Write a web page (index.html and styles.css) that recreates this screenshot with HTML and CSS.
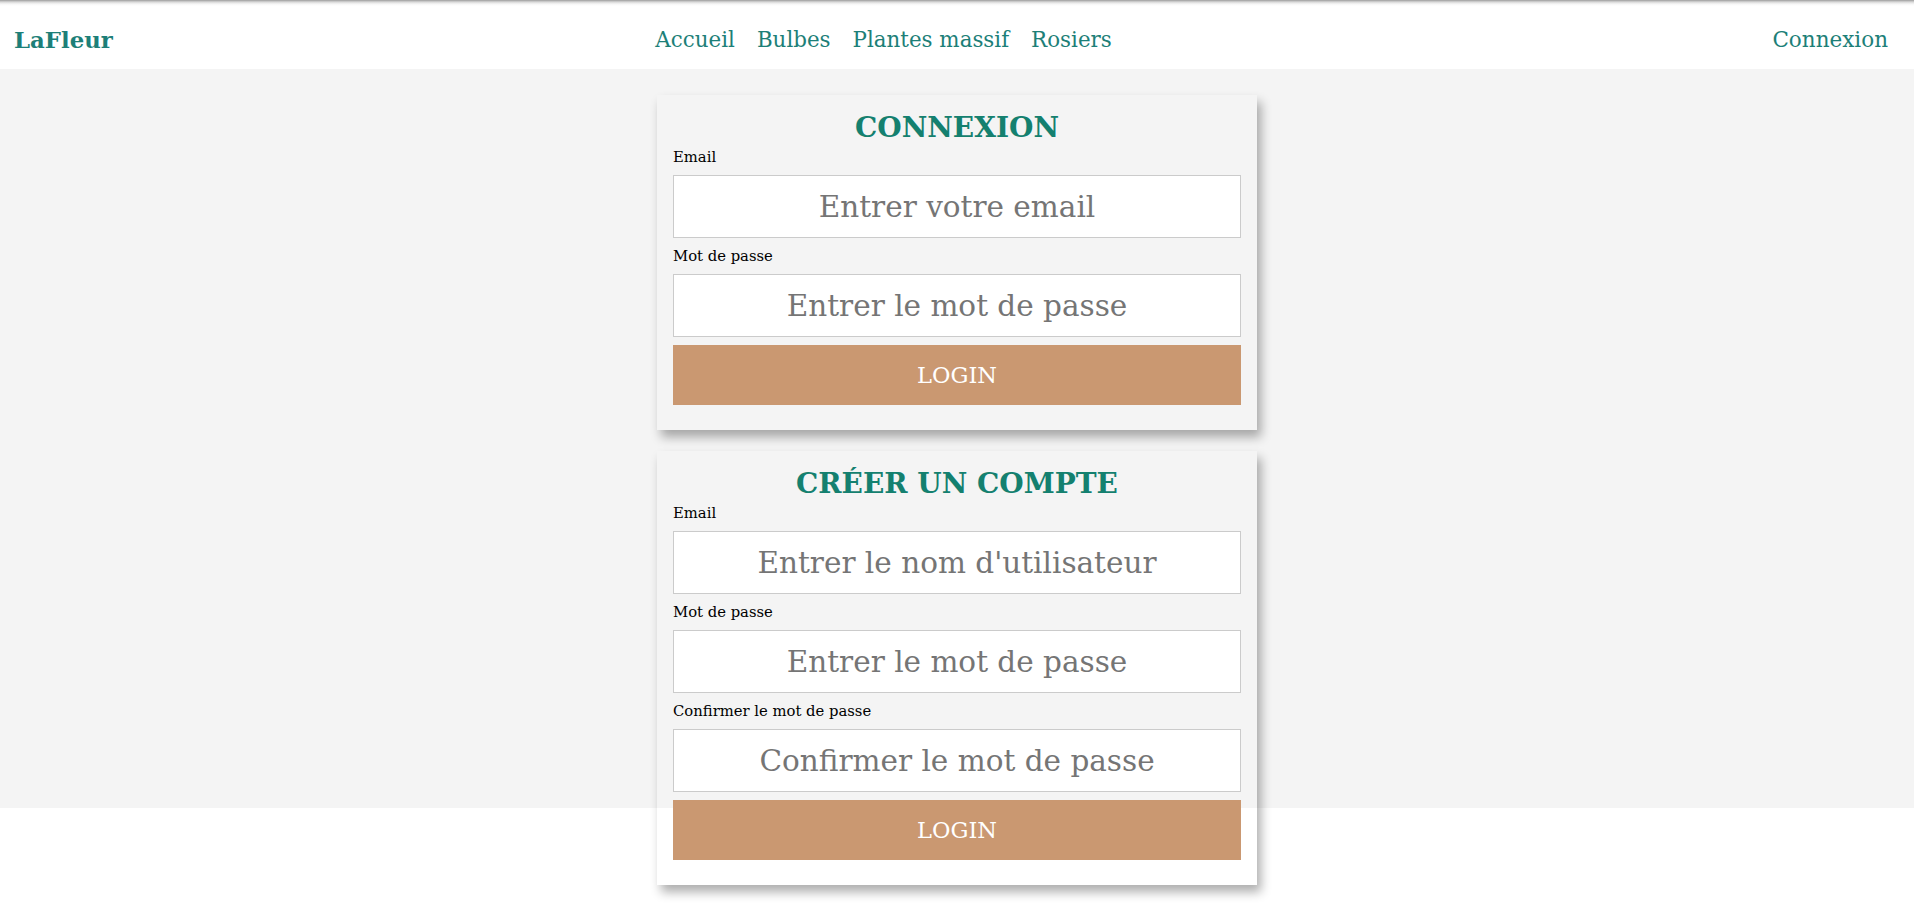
FILE: index.html
```html
<!DOCTYPE html>
<html lang="fr">
<head>
<meta charset="utf-8">
<title>LaFleur - Connexion</title>
<link rel="stylesheet" href="styles.css">
</head>
<body>
<header class="topbar">
  <a class="brand" href="#">LaFleur</a>
  <nav class="menu">
    <a href="#">Accueil</a>
    <a href="#">Bulbes</a>
    <a href="#">Plantes massif</a>
    <a href="#">Rosiers</a>
  </nav>
  <a class="login-link" href="#">Connexion</a>
</header>
<main class="stage">
  <form class="card">
    <h2 class="card-title">CONNEXION</h2>
    <label class="field-label" for="l-email">Email</label>
    <input class="field" id="l-email" type="email" placeholder="Entrer votre email">
    <label class="field-label" for="l-pass">Mot de passe</label>
    <input class="field" id="l-pass" type="password" placeholder="Entrer le mot de passe">
    <button class="submit" type="button">LOGIN</button>
  </form>
  <form class="card">
    <h2 class="card-title">CRÉER UN COMPTE</h2>
    <label class="field-label" for="r-email">Email</label>
    <input class="field" id="r-email" type="text" placeholder="Entrer le nom d'utilisateur">
    <label class="field-label" for="r-pass">Mot de passe</label>
    <input class="field" id="r-pass" type="password" placeholder="Entrer le mot de passe">
    <label class="field-label" for="r-pass2">Confirmer le mot de passe</label>
    <input class="field" id="r-pass2" type="password" placeholder="Confirmer le mot de passe">
    <button class="submit" type="button">LOGIN</button>
  </form>
</main>
</body>
</html>
```
FILE: styles.css
```css
* { box-sizing: border-box; }

html, body {
  margin: 0;
  padding: 0;
  background: #ffffff;
  font-family: "DejaVu Serif", "Liberation Serif", serif;
  color: #000;
}

.topbar {
  height: 69px;
  display: flex;
  justify-content: space-between;
  align-items: flex-start;
  padding: 28px 26px 0 14px;
  background: linear-gradient(to bottom, #9c9c9c 0, #d8d8d8 2px, #f6f6f6 4px, #ffffff 6px);
}

.topbar a {
  text-decoration: none;
  color: #1d7f78;
  font-size: 21.5px;
  line-height: 24px;
}

.topbar .brand {
  font-weight: bold;
  font-size: 22.8px;
}

.menu {
  display: flex;
  gap: 22px;
  padding-right: 118px;
}

.menu a {
  font-size: 21.4px;
}

.stage {
  background: linear-gradient(#f4f4f4, #f4f4f4) top left / 100% 80vh no-repeat;
  padding: 26px 0 30px;
}

.card {
  width: 600px;
  margin: 0 auto 21px;
  padding: 15px 16px 25px;
  display: flex;
  flex-direction: column;
  background: transparent;
  box-shadow: 4px 7px 10px rgba(0, 0, 0, 0.32);
}

.card-title {
  margin: 0 0 2px;
  text-align: center;
  font-size: 28px;
  line-height: 36px;
  font-weight: bold;
  color: #14806f;
}

.field-label {
  display: block;
  font-size: 14.8px;
  line-height: 18px;
  margin-bottom: 9px;
}

.field {
  display: block;
  width: 100%;
  height: 63px;
  margin: 0 0 9px;
  border: 1px solid #cbcbcb;
  background: #ffffff;
  font-family: inherit;
  font-size: 29.5px;
  text-align: center;
  padding: 0 10px;
  outline: none;
}

.field::placeholder {
  color: #757575;
  opacity: 1;
}

.submit {
  display: block;
  width: 100%;
  height: 60px;
  margin-top: -1px;
  border: none;
  background: #ca9871;
  color: #ffffff;
  font-family: inherit;
  font-size: 22.5px;
  cursor: pointer;
}
```
